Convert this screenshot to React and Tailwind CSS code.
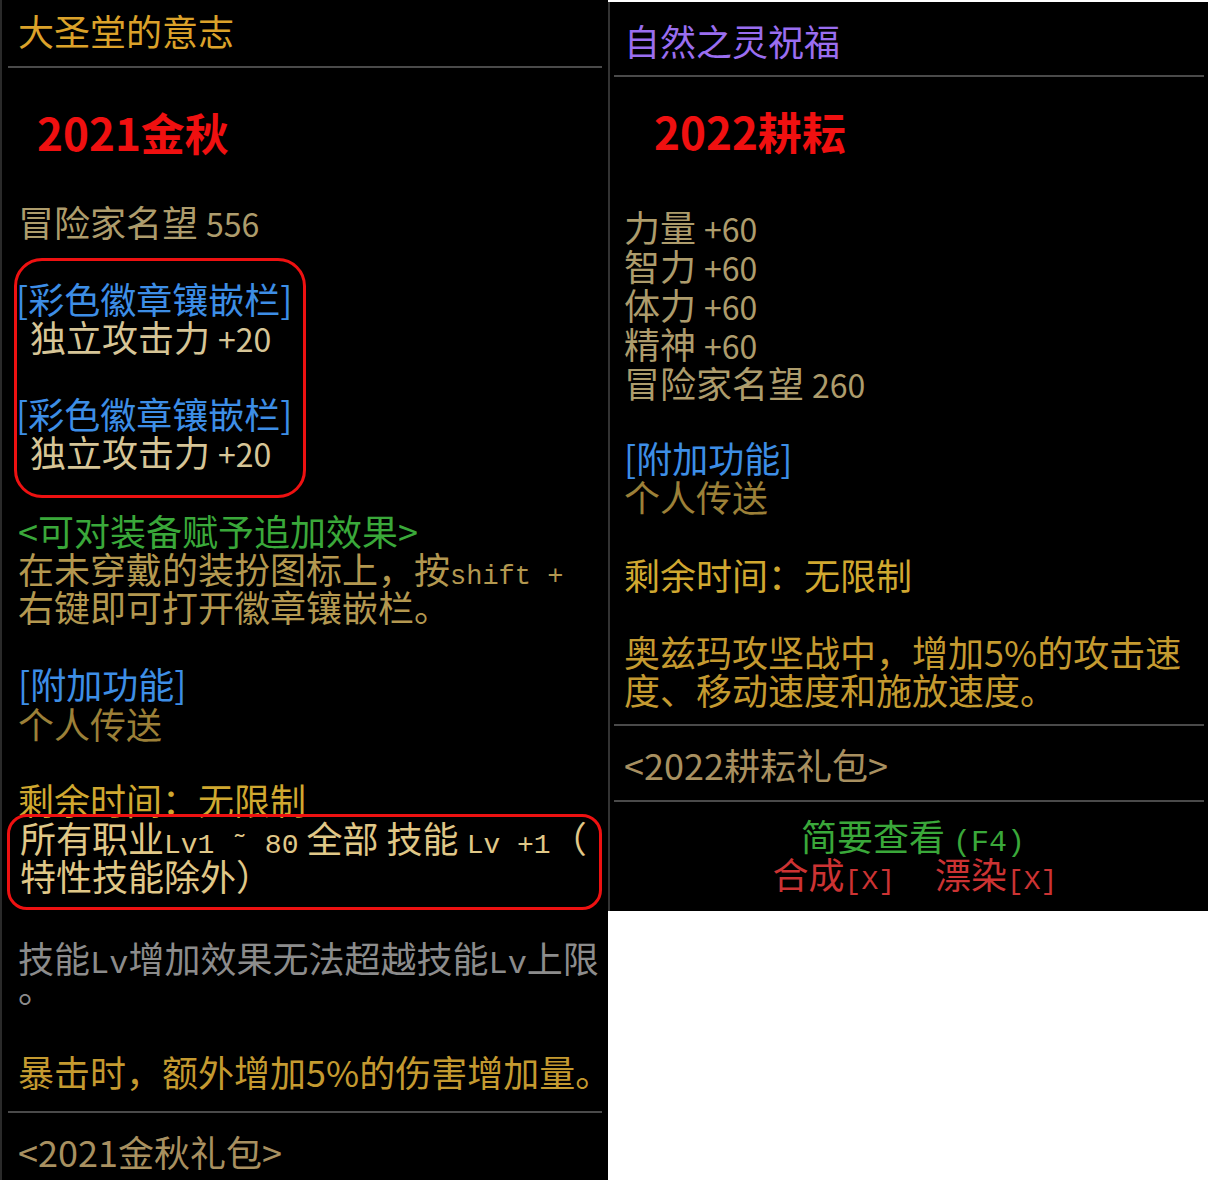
const Mono = ({ children, size = "text-[30px]" }) => (
  <span className={`font-['Liberation_Mono',monospace] ${size} leading-none`}>{children}</span>
)

const Num = ({ children }) => <span className="text-[32px] leading-none">{children}</span>

function L({ className = "", children }) {
  return <div className={`h-[38px] whitespace-nowrap ${className}`}>{children}</div>
}

function Divider({ className = "" }) {
  return <div className={`h-[2px] bg-[#4a4a4a] ${className}`} />
}

function LeftPanel() {
  return (
    <div className="w-[608px] h-[1180px] bg-black border-l-2 border-[#2a2a2a] flex flex-col">
      <L className="ml-[16px] mt-[11px] text-[#dba22a]">大圣堂的意志</L>
      <Divider className="mx-[6px] mt-[17px]" />
      <div className="pl-[35px] mt-[36px] h-[56px] text-[44px] font-bold leading-[56px] text-[#f01010]">2021金秋</div>
      <L className="ml-[16px] mt-[42px] text-[#ad9c6c]">冒险家名望 <Num>556</Num></L>

      <div className="ml-[12px] mt-[18px] w-[292px] h-[240px] border-[3px] border-[#ee1111] rounded-[28px] pt-[18px]">
        <L className="-ml-[1px] text-[#3d8ee6]">[彩色徽章镶嵌栏]</L>
        <L className="pl-[13px] text-[#d6c597]">独立攻击力 <Num>+20</Num></L>
        <div className="h-[39px]" />
        <L className="-ml-[1px] text-[#3d8ee6]">[彩色徽章镶嵌栏]</L>
        <L className="pl-[13px] text-[#d6c597]">独立攻击力 <Num>+20</Num></L>
      </div>

      <L className="ml-[16px] mt-[13px] text-[#3aa83a]">&lt;可对装备赋予追加效果&gt;</L>
      <L className="ml-[16px] text-[#b39850]">在未穿戴的装扮图标上，按<Mono size="text-[27px]">shift +</Mono></L>
      <L className="ml-[16px] text-[#b39850]">右键即可打开徽章镶嵌栏。</L>
      <div className="h-[39px]" />
      <L className="ml-[16px] text-[#3d8ee6]">[附加功能]</L>
      <L className="ml-[16px] mt-[2px] text-[#9c8038]">个人传送</L>
      <div className="h-[38px]" />
      <L className="ml-[16px] text-[#d0a830]">剩余时间：无限制</L>

      <div className="ml-[5px] -mt-[4px] w-[595px] h-[96px] border-[3px] border-[#ee1111] rounded-[20px] pt-[1px] pl-[10px] text-[#e0c888]">
        <L>所有职业<Mono size="text-[28px]">Lv1 ˜ 80</Mono> 全部 技能 <Mono size="text-[28px]">Lv +1</Mono>（</L>
        <L>特性技能除外）</L>
      </div>

      <L className="ml-[16px] mt-[28px] text-[#8c8c8c]">
        技能<Mono size="text-[32px]">Lv</Mono>增加效果无法超越技能<Mono size="text-[32px]">Lv</Mono>上限
      </L>
      <L className="ml-[16px] text-[#8c8c8c] -mt-[8px]">。</L>
      <div className="h-[46px]" />
      <L className="ml-[16px] text-[#c49a30]">暴击时，额外增加5%的伤害增加量。</L>
      <Divider className="mx-[6px] mt-[21px]" />
      <L className="ml-[16px] mt-[19px] text-[#a89060]">&lt;2021金秋礼包&gt;</L>
    </div>
  )
}

function RightPanel() {
  const stats = ["力量", "智力", "体力", "精神"]
  return (
    <div className="w-[600px] h-[909px] mt-[2px] bg-black border-l-2 border-[#333] flex flex-col">
      <L className="ml-[14px] mt-[19px] text-[#9a6ef0]">自然之灵祝福</L>
      <Divider className="mx-[4px] mt-[16px]" />
      <div className="pl-[44px] mt-[26px] h-[56px] text-[44px] font-bold leading-[56px] text-[#f01010]">2022耕耘</div>
      <div className="mt-[48px] pl-[14px] text-[#ad9c6c] flex flex-col gap-[1px]">
        {stats.map(s => (
          <L key={s}>{s} <Num>+60</Num></L>
        ))}
        <L>冒险家名望 <Num>260</Num></L>
      </div>
      <div className="h-[37px]" />
      <L className="ml-[14px] text-[#3d8ee6]">[附加功能]</L>
      <L className="ml-[14px] mt-[1px] text-[#9c8038]">个人传送</L>
      <div className="h-[40px]" />
      <L className="ml-[14px] text-[#d0a830]">剩余时间：无限制</L>
      <div className="h-[39px]" />
      <L className="ml-[14px] text-[#c49a30]">奥兹玛攻坚战中，增加5%的攻击速</L>
      <L className="ml-[14px] text-[#c49a30]">度、移动速度和施放速度。</L>
      <Divider className="mx-[4px] mt-[16px]" />
      <L className="ml-[14px] mt-[19px] text-[#a89060]">&lt;2022耕耘礼包&gt;</L>
      <Divider className="mx-[4px] mt-[17px]" />
      <div className="mt-[14px] text-center">
        <L className="text-[#3aa83a] pl-[8px]">简要查看 <Mono>(F4)</Mono></L>
        <L className="text-[#cc3333] pl-[12px]">
          合成<Mono size="text-[28px]">[X]</Mono><span className="inline-block w-[40px]" />漂染<Mono size="text-[28px]">[X]</Mono>
        </L>
      </div>
    </div>
  )
}

export default function App() {
  return (
    <div className="w-[1210px] h-[1180px] bg-white flex font-['Noto_Sans_CJK_SC','Noto_Sans',sans-serif] text-[36px] leading-[38px] overflow-hidden">
      <LeftPanel />
      <RightPanel />
    </div>
  )
}
